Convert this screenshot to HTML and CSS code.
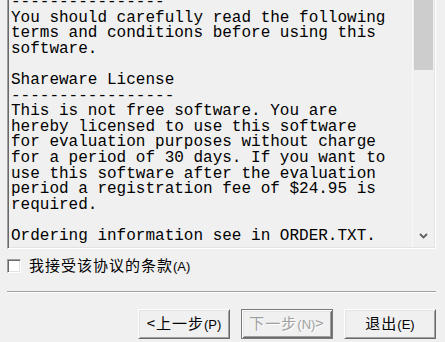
FILE: index.html
```html
<!DOCTYPE html>
<html>
<head>
<meta charset="utf-8">
<link rel="stylesheet" href="styles.css">
</head>
<body>
<div class="dialog">
  <div class="license-box">
    <div class="license-scroll">
      <pre class="license-text">----------------
You should carefully read the following
terms and conditions before using this
software.

Shareware License
-----------------
This is not free software. You are
hereby licensed to use this software
for evaluation purposes without charge
for a period of 30 days. If you want to
use this software after the evaluation
period a registration fee of $24.95 is
required.

Ordering information see in ORDER.TXT.</pre>
    </div>
    <div class="scrollbar">
      <div class="thumb"></div>
      <div class="track"></div>
      <div class="arrow-down">
        <svg width="9" height="6" viewBox="0 0 9 6"><path d="M1 1 L4.5 4.5 L8 1" fill="none" stroke="#606060" stroke-width="1.8"/></svg>
      </div>
    </div>
  </div>
  <label class="accept">
    <span class="checkbox"></span>
    <span class="accept-text">我接受该协议的条款<span class="acc">(A)</span></span>
  </label>
  <div class="separator"></div>
  <div class="buttons">
    <button class="btn">&lt;上一步<span class="acc">(P)</span></button>
    <button class="btn btn-disabled">下一步<span class="acc">(N)</span>&gt;</button>
    <button class="btn">退出<span class="acc">(E)</span></button>
  </div>
</div>
</body>
</html>
```

FILE: styles.css
```css
html, body {
  margin: 0;
  padding: 0;
  background: #f0f0f0;
  width: 445px;
  height: 342px;
  overflow: hidden;
}

.dialog {
  padding: 0 9px 0 7px;
  display: flex;
  flex-direction: column;
}

.license-box {
  height: 248px;
  display: flex;
  border-left: 1px solid #a0a0a0;
  border-right: 1px solid #ffffff;
  border-bottom: 1px solid #ffffff;
  box-shadow: inset 1px 0 0 #696969, inset 0 -1px 0 #e3e3e3, inset -1px 0 0 #e3e3e3;
  background: #f0f0f0;
  overflow: hidden;
}

.license-scroll {
  flex: 1;
  min-width: 0;
  overflow: hidden;
}

.license-text {
  margin: -5px 0 0 0;
  padding: 0 0 0 3px;
  font-family: "Liberation Mono", "Courier New", monospace;
  font-size: 16px;
  line-height: 15.6px;
  color: #000;
  white-space: pre;
}

.scrollbar {
  width: 21px;
  flex: none;
  display: flex;
  flex-direction: column;
  border-left: 1px solid #f8f8f8;
  margin-bottom: 1px;
  margin-right: 1px;
}

.thumb {
  height: 70px;
  margin: 0 1px 0 1px;
  background: #cdcdcd;
}

.track {
  flex: 1;
}

.arrow-down {
  height: 17px;
  display: flex;
  align-items: center;
  justify-content: center;
  margin-bottom: 3px;
}

.accept {
  display: flex;
  align-items: center;
  height: 16px;
  margin-top: 9px;
}

.checkbox {
  width: 12px;
  height: 12px;
  background: #fff;
  border-top: 1px solid #a0a0a0;
  border-left: 1px solid #a0a0a0;
  border-right: 1px solid #ffffff;
  border-bottom: 1px solid #ffffff;
  box-shadow: inset 1px 1px 0 #696969, inset -1px -1px 0 #e3e3e3;
}

.accept-text {
  margin-left: 8px;
  font-family: "Noto Sans CJK SC", sans-serif;
  font-size: 15px;
  letter-spacing: 1px;
  color: #000;
  line-height: 16px;
}

.acc {
  font-family: "Liberation Sans", "Noto Sans CJK SC", sans-serif;
  font-size: 13px;
  letter-spacing: 0;
}

.separator {
  margin-top: 17px;
  height: 1px;
  background: #a0a0a0;
  border-bottom: 1px solid #ffffff;
}

.buttons {
  margin-top: 16px;
  display: flex;
  justify-content: flex-end;
  gap: 11px;
}

.btn {
  width: 92px;
  height: 30px;
  padding: 0;
  margin: 0;
  background: #f0f0f0;
  border-top: 1px solid #ffffff;
  border-left: 1px solid #ffffff;
  border-right: 1px solid #696969;
  border-bottom: 1px solid #696969;
  box-shadow: inset 1px 1px 0 #e3e3e3, inset -1px -1px 0 #a0a0a0;
  font-family: "Noto Sans CJK SC", sans-serif;
  font-size: 15px;
  letter-spacing: 1px;
  color: #000;
  line-height: 16px;
}

.btn-disabled {
  border: 1px solid #7a7a7a;
  box-shadow: inset 1px 1px 0 #ffffff, inset -1px -1px 0 #696969, inset 2px 2px 0 #e3e3e3, inset -2px -2px 0 #a0a0a0;
  color: #a0a0a0;
  text-shadow: 1px 1px 0 #ffffff;
}
```
